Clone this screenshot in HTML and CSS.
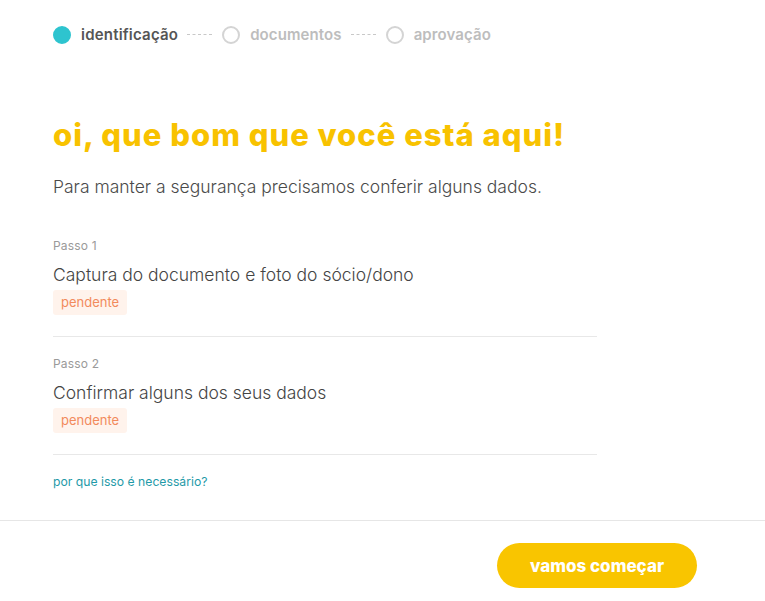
FILE: index.html
```html
<!DOCTYPE html>
<html lang="pt-BR">
<head>
<meta charset="utf-8">
<title>Identificação</title>
<link rel="stylesheet" href="styles.css">
</head>
<body>
<div class="page">
  <main class="content">
    <nav class="stepper">
      <div class="step active"><span class="dot"></span><span class="label">identificação</span></div>
      <span class="dash"></span>
      <div class="step"><span class="dot"></span><span class="label">documentos</span></div>
      <span class="dash"></span>
      <div class="step"><span class="dot"></span><span class="label">aprovação</span></div>
    </nav>
    <h1 class="title">oi, que bom que você está aqui!</h1>
    <p class="subtitle">Para manter a segurança precisamos conferir alguns dados.</p>
    <ul class="tasks">
      <li class="task">
        <div class="task-step">Passo 1</div>
        <div class="task-name">Captura do documento e foto do sócio/dono</div>
        <span class="badge">pendente</span>
      </li>
      <li class="task">
        <div class="task-step">Passo 2</div>
        <div class="task-name">Confirmar alguns dos seus dados</div>
        <span class="badge">pendente</span>
      </li>
    </ul>
    <a class="why" href="#">por que isso é necessário?</a>
  </main>
  <footer class="footer">
    <button class="cta">vamos começar</button>
  </footer>
</div>
</body>
</html>
```
FILE: styles.css
```css
* { box-sizing: border-box; }
html, body { margin: 0; padding: 0; background: #fff; }
body { font-family: "Inter", "Noto Sans", sans-serif; color: #4a4a4a; }
.page { width: 765px; min-height: 601px; display: flex; flex-direction: column; }
.content { padding: 25px 0 0 53px; width: 597px; height: 520px; }
.stepper { display: flex; align-items: center; height: 19px; }
.step { display: flex; align-items: center; gap: 10px; }
.dot { width: 18px; height: 18px; border-radius: 50%; border: 2px solid #d4d4d4; background: #fff; flex: none; }
.step.active .dot { background: #2ec4cf; border-color: #2ec4cf; }
.label { font-size: 15px; font-weight: 600; color: #bdbdbd; letter-spacing: 0.1px; }
.step.active .label { color: #555; letter-spacing: 0.2px; }
.dash { width: 25px; border-top: 1px dashed #c8c8c8; margin: 0 10px 0 9px; }
.title { margin: 71px 0 0; font-size: 31px; line-height: 40px; font-weight: 800; color: #f8c200; letter-spacing: 1px; }
.subtitle { margin: 20px 0 0; font-size: 17.5px; line-height: 24px; font-weight: 300; color: #4a4a4a; }
.tasks { list-style: none; margin: 39px 0 0; padding: 0; }
.task { border-bottom: 1px solid #e8e8e8; padding: 0 0 21px; margin-bottom: 19px; display: flex; flex-direction: column; align-items: flex-start; }
.task:last-child { margin-bottom: 15px; }
.task-step { font-size: 12px; line-height: 16px; color: #9a9a9a; letter-spacing: 0.2px; }
.task-name { margin-top: 9px; font-size: 17.5px; line-height: 24px; font-weight: 300; color: #444; }
.badge { margin-top: 3px; background: #fff3ec; color: #f28a5c; font-size: 13px; line-height: 25px; padding: 0 8px; border-radius: 3px; }
.why { display: inline-block; font-size: 12.2px; line-height: 16px; color: #1f9aa8; text-decoration: none; }
.footer { border-top: 1px solid #e6e6e6; height: 81px; display: flex; justify-content: flex-end; align-items: flex-start; padding: 22px 68px 0 0; }
.cta { width: 200px; height: 45px; border: 0; border-radius: 23px; background: #f9c500; color: #fff; font-family: "Inter", sans-serif; font-size: 17px; font-weight: 800; cursor: pointer; }
```
